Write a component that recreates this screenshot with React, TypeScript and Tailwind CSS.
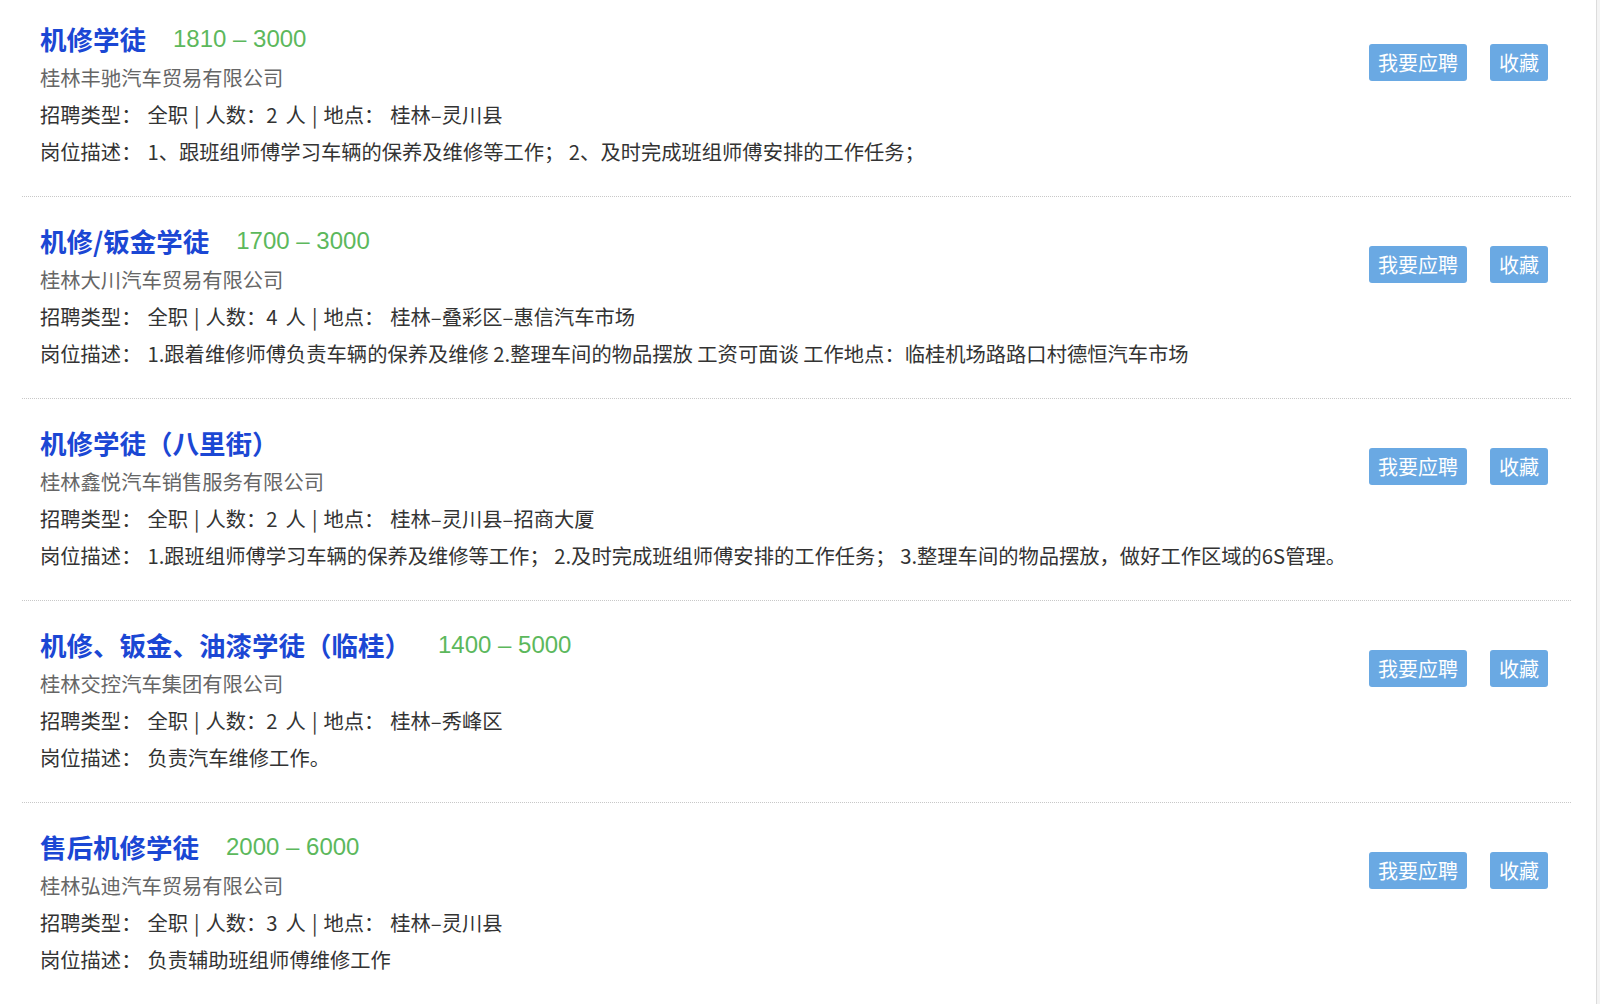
import React from "react";

type Job = {
  title: string;
  salary?: string;
  company: string;
  count: number;
  place: string;
  desc: string;
};

const jobs: Job[] = [
  {
    title: "机修学徒",
    salary: "1810 – 3000",
    company: "桂林丰驰汽车贸易有限公司",
    count: 2,
    place: "桂林–灵川县",
    desc: "1、跟班组师傅学习车辆的保养及维修等工作； 2、及时完成班组师傅安排的工作任务；",
  },
  {
    title: "机修/钣金学徒",
    salary: "1700 – 3000",
    company: "桂林大川汽车贸易有限公司",
    count: 4,
    place: "桂林–叠彩区–惠信汽车市场",
    desc: "1.跟着维修师傅负责车辆的保养及维修 2.整理车间的物品摆放 工资可面谈 工作地点：临桂机场路路口村德恒汽车市场",
  },
  {
    title: "机修学徒（八里街）",
    company: "桂林鑫悦汽车销售服务有限公司",
    count: 2,
    place: "桂林–灵川县–招商大厦",
    desc: "1.跟班组师傅学习车辆的保养及维修等工作； 2.及时完成班组师傅安排的工作任务； 3.整理车间的物品摆放，做好工作区域的6S管理。",
  },
  {
    title: "机修、钣金、油漆学徒（临桂）",
    salary: "1400 – 5000",
    company: "桂林交控汽车集团有限公司",
    count: 2,
    place: "桂林–秀峰区",
    desc: "负责汽车维修工作。",
  },
  {
    title: "售后机修学徒",
    salary: "2000 – 6000",
    company: "桂林弘迪汽车贸易有限公司",
    count: 3,
    place: "桂林–灵川县",
    desc: "负责辅助班组师傅维修工作",
  },
];

function JobRow({ job, first }: { job: Job; first: boolean }) {
  return (
    <div
      className={`flex justify-between items-start pl-[18px] pr-[23px] pb-[26px] border-b border-dotted border-[#c8c8c8] ${
        first ? "pt-[20px]" : "pt-[25px]"
      }`}
    >
      <div>
        <div className="h-[38px] flex items-center">
          <span className="text-[26.5px] font-bold text-[#1b47d4]">{job.title}</span>
          {job.salary && (
            <span
              className="ml-[27px] text-[24px] text-[#5cb85c]"
              style={{ fontFamily: '"Liberation Sans", "Noto Sans CJK SC", sans-serif' }}
            >
              {job.salary}
            </span>
          )}
        </div>
        <div className="h-[38px] flex items-center text-[20.3px] text-[#666]">{job.company}</div>
        <div className="h-[37px] flex items-center text-[20.3px] text-[#333] whitespace-pre">
          <span>招聘类型：</span>
          <span className="ml-[6px]">全职</span>
          <span className="ml-[6px]">|</span>
          <span className="ml-[6px]">人数：{job.count}</span>
          <span className="ml-[8px]">人</span>
          <span className="ml-[6px]">|</span>
          <span className="ml-[6px]">地点：</span>
          <span className="ml-[6px]">{job.place}</span>
        </div>
        <div className="h-[37px] flex items-center text-[20.3px] text-[#333] whitespace-pre">
          <span>岗位描述：</span>
          <span className="ml-[6px]">{job.desc}</span>
        </div>
      </div>
      <div className="mt-[24px] flex gap-[23px]">
        <button className="w-[98px] h-[37px] rounded-[3px] bg-[#6aa9e3] text-white text-[20px]">
          我要应聘
        </button>
        <button className="w-[58px] h-[37px] rounded-[3px] bg-[#6aa9e3] text-white text-[20px]">
          收藏
        </button>
      </div>
    </div>
  );
}

export default function App() {
  return (
    <div
      className="flex h-[1004px] overflow-hidden bg-white"
      style={{ fontFamily: '"Noto Sans CJK SC", "Noto Sans", sans-serif' }}
    >
      <div className="flex-1 pl-[22px] pr-[25px]">
        {jobs.map((job, i) => (
          <JobRow key={i} job={job} first={i === 0} />
        ))}
      </div>
      <div className="w-[4px] border-l border-[#dcdcdc] bg-[#f4f4f4]" />
    </div>
  );
}
